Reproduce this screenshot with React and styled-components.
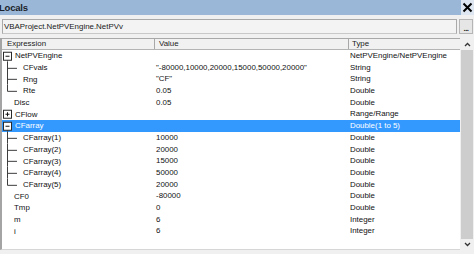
import React from "react";
import styled, { createGlobalStyle } from "styled-components";

const ROW_H = 11.7;

const Global = createGlobalStyle`
  html, body { margin: 0; padding: 0; background: #f0f0f0; }
  body { font-family: "Liberation Sans", Arial, sans-serif; overflow: hidden; }
`;

const Window = styled.div`
  width: 474px;
  height: 254px;
  display: flex;
  flex-direction: column;
  background: #f0f0f0;
  overflow: hidden;
`;

const TitleBar = styled.div`
  height: 15px;
  flex: none;
  background: #9bb7d7;
  display: flex;
  align-items: center;
  justify-content: space-between;
`;

const Title = styled.span`
  font-size: 9.5px;
  font-weight: bold;
  color: #1b1f2a;
  letter-spacing: -0.2px;
  margin-left: -1px;
`;

const CloseButton = styled.div`
  width: 13px;
  height: 15px;
  background: #dde6f1;
  display: flex;
  align-items: center;
  justify-content: center;
`;

const ContextRow = styled.div`
  display: flex;
  gap: 2px;
  height: 15px;
  margin: 4px 1px 4px 2px;
  flex: none;
`;

const ContextBox = styled.div`
  flex: 1;
  border: 1px solid #a9a9a9;
  border-bottom-color: #c8c8c8;
  background: #f3f3f3;
  font-size: 7.9px;
  color: #1a1a1a;
  display: flex;
  align-items: center;
  padding-left: 1px;
`;

const DotsButton = styled.div`
  width: 12px;
  border: 1px solid #b5b5b5;
  background: #e6e6e6;
  font-size: 8px;
  font-weight: bold;
  color: #222;
  display: flex;
  align-items: flex-end;
  justify-content: center;
  line-height: 9px;
  letter-spacing: -0.5px;
`;

const Main = styled.div`
  flex: none;
  height: 212px;
  display: flex;
`;

const Panel = styled.div`
  flex: 1;
  display: flex;
  flex-direction: column;
  border-left: 2px solid #a4a4a4;
  border-bottom: 1px solid #d6d6d6;
`;

const Header = styled.div`
  height: 12px;
  box-sizing: border-box;
  display: grid;
  grid-template-columns: 153px 194px 1fr;
  border-top: 1px solid #a8a8a8;
  border-bottom: 1px solid #b4b4b4;
  background: #f1f1f1;
`;

const HeaderCell = styled.div`
  font-size: 7.9px;
  color: #222;
  line-height: 10px;
  padding-left: ${(p) => p.$pad}px;
  border-right: ${(p) => (p.$last ? "none" : "1px solid #a8a8a8")};
  white-space: nowrap;
  overflow: hidden;
`;

const Body = styled.div`
  flex: 1;
  background: #ffffff;
`;

const Row = styled.div`
  height: ${ROW_H}px;
  display: grid;
  grid-template-columns: 153px 194px 1fr;
  align-items: center;
  background: ${(p) => (p.$selected ? "#3399ff" : "transparent")};
  color: ${(p) => (p.$selected ? "#ffffff" : "#111111")};
  font-size: 7.9px;
  white-space: nowrap;
`;

const NameCell = styled.div`
  display: flex;
  align-items: center;
  height: 100%;
`;

const Cell = styled.div`
  padding-left: 1px;
  overflow: hidden;
  line-height: ${ROW_H}px;
`;

const Gutter = styled.svg`
  flex: none;
  display: block;
  overflow: visible;
`;

const ScrollBar = styled.div`
  width: 14px;
  flex: none;
  display: flex;
  flex-direction: column;
  background: #f0f0f0;
`;

const Arrow = styled.div`
  height: ${(p) => p.$h}px;
  display: flex;
  align-items: center;
  justify-content: center;
  flex: none;
`;

const Thumb = styled.div`
  flex: 1;
  margin: 0 1px 0 1px;
  background: #cdcdcd;
`;

const LINE = "#3c3c3c";

function TreeGutter({ kind }) {
  const c = ROW_H / 2;
  const w = kind === "child" || kind === "last" ? 21 : kind === "leaf" ? 12 : 13;
  return (
    <Gutter width={w} height={ROW_H} viewBox={`0 0 ${w} ${ROW_H}`}>
      {(kind === "minus" || kind === "plus") && (
        <g>
          <rect x="1.5" y={c - 3.6} width="8" height="8" fill="#fff" stroke="#2a2a2a" strokeWidth="1" />
          <line x1="3.5" x2="7.5" y1={c + 0.4} y2={c + 0.4} stroke="#111" strokeWidth="1" />
          {kind === "plus" && <line x1="5.5" x2="5.5" y1={c - 1.6} y2={c + 2.4} stroke="#111" strokeWidth="1" />}
          {kind === "minus" && <line x1="5.5" x2="5.5" y1={c + 4.4} y2={ROW_H} stroke={LINE} strokeWidth="1" />}
        </g>
      )}
      {(kind === "child" || kind === "last") && (
        <g>
          <line x1="5.5" x2="5.5" y1="0" y2={kind === "last" ? c + 0.5 : ROW_H} stroke={LINE} strokeWidth="1" />
          <line x1="5.5" x2="15" y1={c + 0.5} y2={c + 0.5} stroke={LINE} strokeWidth="1" />
        </g>
      )}
    </Gutter>
  );
}

const rows = [
  { name: "NetPVEngine", kind: "minus", value: "", type: "NetPVEngine/NetPVEngine" },
  { name: "CFvals", kind: "child", value: '"-80000,10000,20000,15000,50000,20000"', type: "String" },
  { name: "Rng", kind: "child", value: '"CF"', type: "String" },
  { name: "Rte", kind: "last", value: "0.05", type: "Double" },
  { name: "Disc", kind: "leaf", value: "0.05", type: "Double" },
  { name: "CFlow", kind: "plus", value: "", type: "Range/Range" },
  { name: "CFarray", kind: "minus", value: "", type: "Double(1 to 5)", selected: true },
  { name: "CFarray(1)", kind: "child", value: "10000", type: "Double" },
  { name: "CFarray(2)", kind: "child", value: "20000", type: "Double" },
  { name: "CFarray(3)", kind: "child", value: "15000", type: "Double" },
  { name: "CFarray(4)", kind: "child", value: "50000", type: "Double" },
  { name: "CFarray(5)", kind: "last", value: "20000", type: "Double" },
  { name: "CF0", kind: "leaf", value: "-80000", type: "Double" },
  { name: "Tmp", kind: "leaf", value: "0", type: "Double" },
  { name: "m", kind: "leaf", value: "6", type: "Integer" },
  { name: "i", kind: "leaf", value: "6", type: "Integer" },
];

export default function App() {
  return (
    <Window>
      <Global />
      <TitleBar>
        <Title>Locals</Title>
        <CloseButton>
          <svg width="11" height="11" viewBox="0 0 11 11">
            <path d="M1.5 1.5 L9.5 9.5 M9.5 1.5 L1.5 9.5" stroke="#000" strokeWidth="2" />
          </svg>
        </CloseButton>
      </TitleBar>
      <ContextRow>
        <ContextBox>VBAProject.NetPVEngine.NetPVv</ContextBox>
        <DotsButton>...</DotsButton>
      </ContextRow>
      <Main>
        <Panel>
          <Header>
            <HeaderCell $pad={5}>Expression</HeaderCell>
            <HeaderCell $pad={4}>Value</HeaderCell>
            <HeaderCell $pad={3} $last>Type</HeaderCell>
          </Header>
          <Body>
            {rows.map((r) => (
              <Row key={r.name} $selected={r.selected}>
                <NameCell>
                  <TreeGutter kind={r.kind} />
                  <span>{r.name}</span>
                </NameCell>
                <Cell>{r.value}</Cell>
                <Cell>{r.type}</Cell>
              </Row>
            ))}
          </Body>
        </Panel>
        <ScrollBar>
          <Arrow $h={12}>
            <svg width="7" height="5" viewBox="0 0 7 5">
              <path d="M1 4 L3.5 1.5 L6 4" stroke="#333" strokeWidth="1.3" fill="none" />
            </svg>
          </Arrow>
          <Thumb />
          <Arrow $h={11}>
            <svg width="7" height="5" viewBox="0 0 7 5">
              <path d="M1 1 L3.5 3.5 L6 1" stroke="#333" strokeWidth="1.3" fill="none" />
            </svg>
          </Arrow>
        </ScrollBar>
      </Main>
    </Window>
  );
}
